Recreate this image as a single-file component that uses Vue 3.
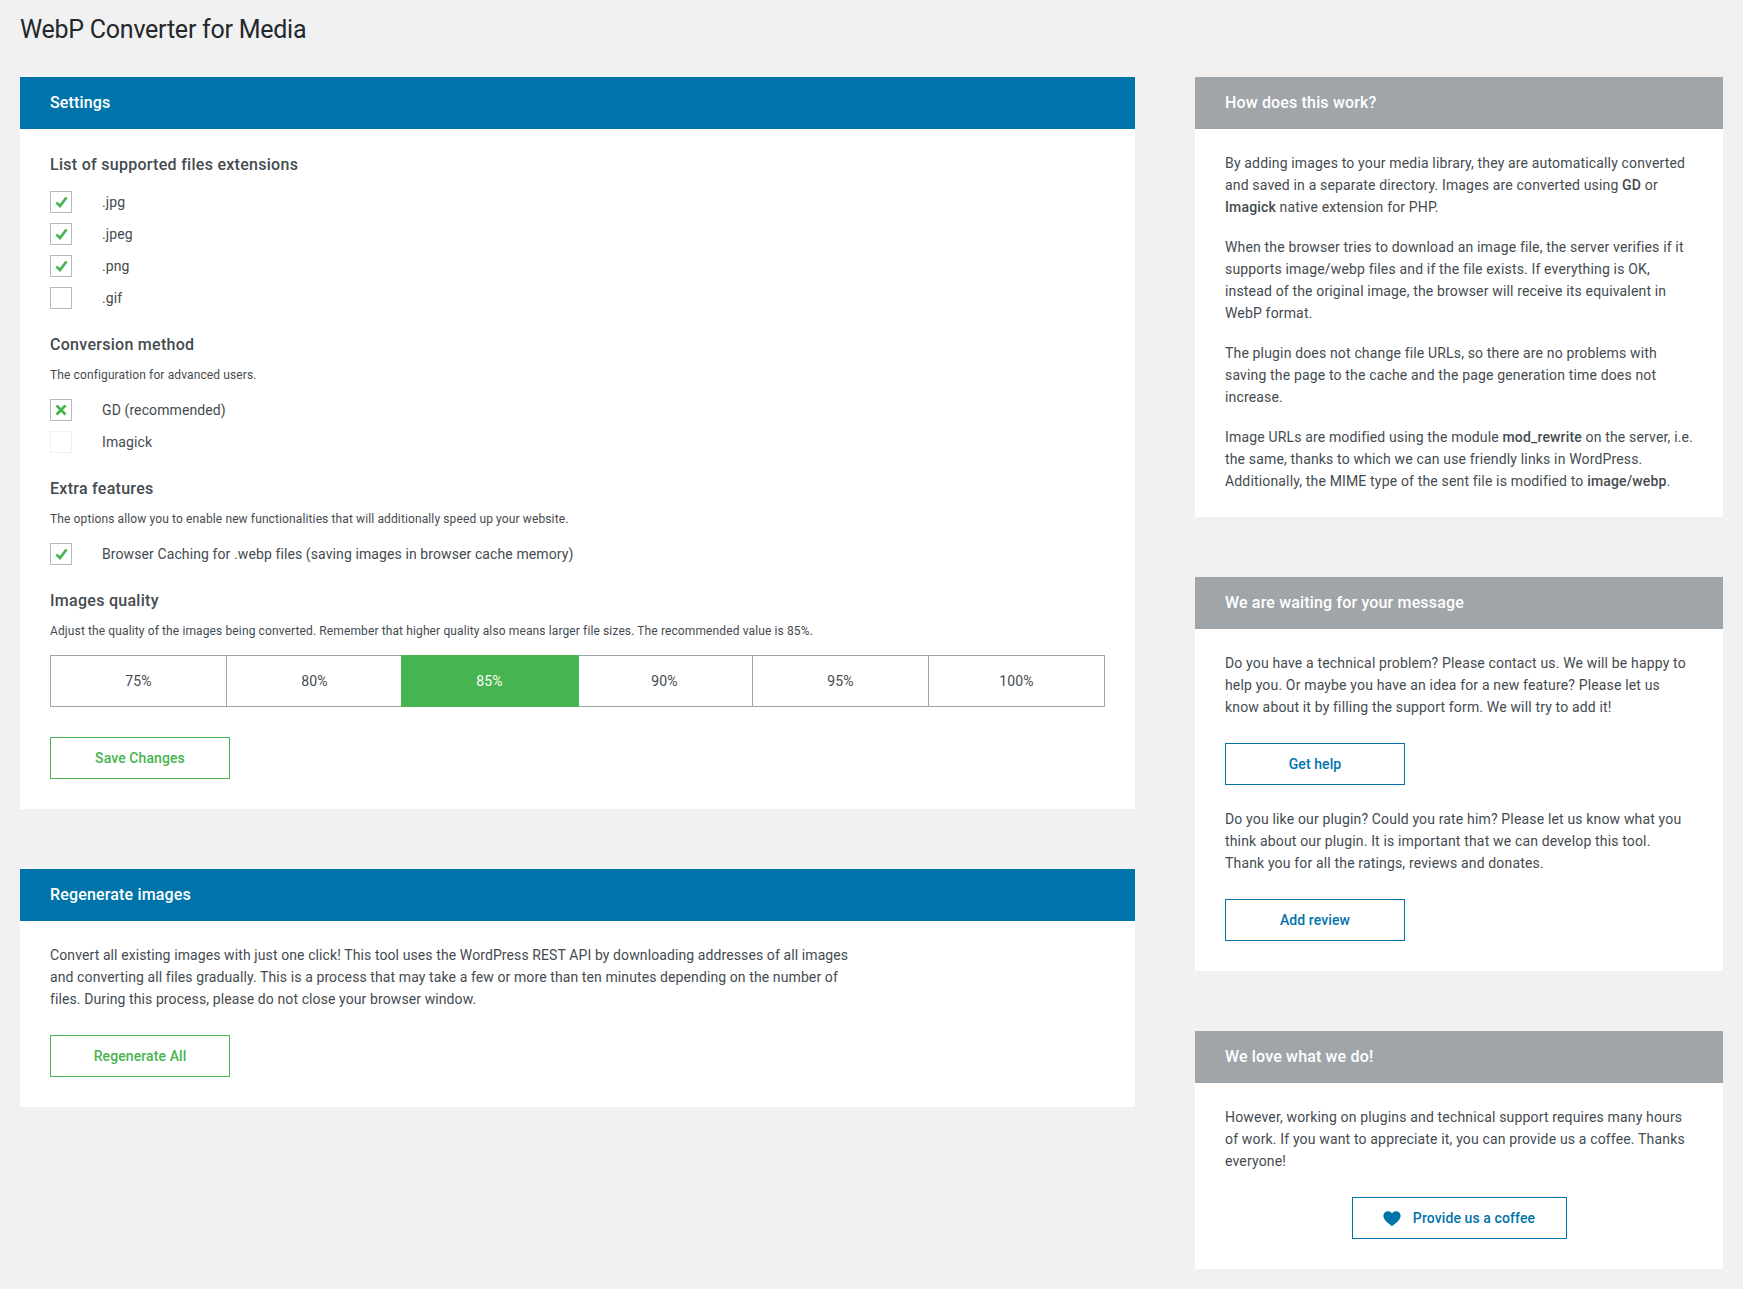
<script setup>
const exts = [
  { label: '.jpg', on: true },
  { label: '.jpeg', on: true },
  { label: '.png', on: true },
  { label: '.gif', on: false }
]
const qualities = ['75%', '80%', '85%', '90%', '95%', '100%']
</script>

<template>
  <div class="page">
    <h1 class="title">WebP Converter for Media</h1>
    <div class="columns">
      <div class="col-main">
        <section class="card">
          <h2 class="head blue">Settings</h2>
          <div class="body">
            <h3 class="sec first">List of supported files extensions</h3>
            <div class="opts">
              <label v-for="e in exts" :key="e.label" class="opt">
                <span class="box">
                  <svg v-if="e.on" viewBox="0 0 20 20" class="mark"><path d="M5.5 10.500 9 14 15.500 5.500" /></svg>
                </span>
                <span>{{ e.label }}</span>
              </label>
            </div>

            <h3 class="sec">Conversion method</h3>
            <p class="sub">The configuration for advanced users.</p>
            <div class="opts">
              <label class="opt">
                <span class="box">
                  <svg viewBox="0 0 20 20" class="mark"><path d="M5.5 5.500 14.500 14.500M14.500 5.500 5.500 14.500" /></svg>
                </span>
                <span>GD (recommended)</span>
              </label>
              <label class="opt">
                <span class="box faint"></span>
                <span>Imagick</span>
              </label>
            </div>

            <h3 class="sec">Extra features</h3>
            <p class="sub">The options allow you to enable new functionalities that will additionally speed up your website.</p>
            <div class="opts">
              <label class="opt">
                <span class="box">
                  <svg viewBox="0 0 20 20" class="mark"><path d="M5.5 10.500 9 14 15.500 5.500" /></svg>
                </span>
                <span>Browser Caching for .webp files (saving images in browser cache memory)</span>
              </label>
            </div>

            <h3 class="sec">Images quality</h3>
            <p class="sub">Adjust the quality of the images being converted. Remember that higher quality also means larger file sizes. The recommended value is 85%.</p>
            <div class="quality">
              <div v-for="q in qualities" :key="q" class="q" :class="{ active: q === '85%' }">{{ q }}</div>
            </div>
            <a class="btn green save">Save Changes</a>
          </div>
        </section>

        <section class="card">
          <h2 class="head blue">Regenerate images</h2>
          <div class="body tight">
            <p class="text nomargin">Convert all existing images with just one click! This tool uses the WordPress REST API by downloading addresses of all images<br>and converting all files gradually. This is a process that may take a few or more than ten minutes depending on the number of<br>files. During this process, please do not close your browser window.</p>
            <a class="btn green after-text">Regenerate All</a>
          </div>
        </section>
      </div>

      <aside class="col-side">
        <section class="card">
          <h2 class="head gray">How does this work?</h2>
          <div class="body tight short">
            <p class="text">By adding images to your media library, they are automatically converted<br>and saved in a separate directory. Images are converted using <b>GD</b> or<br><b>Imagick</b> native extension for PHP.</p>
            <p class="text">When the browser tries to download an image file, the server verifies if it<br>supports image/webp files and if the file exists. If everything is OK,<br>instead of the original image, the browser will receive its equivalent in<br>WebP format.</p>
            <p class="text">The plugin does not change file URLs, so there are no problems with<br>saving the page to the cache and the page generation time does not<br>increase.</p>
            <p class="text nomargin">Image URLs are modified using the module <b>mod_rewrite</b> on the server, i.e.<br>the same, thanks to which we can use friendly links in WordPress.<br>Additionally, the MIME type of the sent file is modified to <b>image/webp</b>.</p>
          </div>
        </section>

        <section class="card">
          <h2 class="head gray">We are waiting for your message</h2>
          <div class="body tight">
            <p class="text nomargin">Do you have a technical problem? Please contact us. We will be happy to<br>help you. Or maybe you have an idea for a new feature? Please let us<br>know about it by filling the support form. We will try to add it!</p>
            <a class="btn blue-btn after-text">Get help</a>
            <p class="text nomargin gap-top">Do you like our plugin? Could you rate him? Please let us know what you<br>think about our plugin. It is important that we can develop this tool.<br>Thank you for all the ratings, reviews and donates.</p>
            <a class="btn blue-btn after-text">Add review</a>
          </div>
        </section>

        <section class="card">
          <h2 class="head gray">We love what we do!</h2>
          <div class="body tight">
            <p class="text nomargin">However, working on plugins and technical support requires many hours<br>of work. If you want to appreciate it, you can provide us a coffee. Thanks<br>everyone!</p>
            <div class="center">
              <a class="btn blue-btn coffee">
                <svg viewBox="0 0 24 20" class="heart"><path d="M12 20C8.500 17 .5 12.600 .5 6.200 .5 2.800 3.200 .2 6.500 .2c2.300 0 4.300 1.100 5.500 3 1.200-1.900 3.200-3 5.500-3 3.300 0 6 2.600 6 6 0 6.400-8 10.800-11.500 13.800Z" /></svg>
                Provide us a coffee
              </a>
            </div>
          </div>
        </section>
      </aside>
    </div>
  </div>
</template>

<style>
html, body { margin: 0; background: #f1f1f1; }
</style>

<style scoped>
.page {
  box-sizing: border-box;
  width: 1743px;
  min-height: 1289px;
  padding: 0 20px 20px;
  background: #f1f1f1;
  color: #444b50;
  font-family: Roboto, "Noto Sans", sans-serif;
  font-size: 14px;
  letter-spacing: 0.1px;
}
.title {
  margin: 0;
  padding: 14px 0 0;
  height: 77px;
  box-sizing: border-box;
  font-size: 25px;
  line-height: 32px;
  font-weight: 400;
  letter-spacing: -0.25px;
  color: #23282d;
}
.columns { display: flex; gap: 60px; align-items: flex-start; }
.col-main { width: 1115px; display: flex; flex-direction: column; gap: 60px; }
.col-side { width: 528px; display: flex; flex-direction: column; gap: 60px; }
.col-side .text { letter-spacing: 0.16px; }
.card { background: #fff; }
.head {
  margin: 0;
  height: 52px;
  padding: 0 30px;
  line-height: 52px;
  font-size: 16px;
  font-weight: 500;
  letter-spacing: 0.16px;
  color: #fff;
}
.blue { background: #0073aa; }
.gray { background: #a0a5aa; }
.body { padding: 25px 30px 30px; }
.body.tight { padding-top: 23px; }
.body.short { padding-bottom: 25px; }
.sec {
  margin: 25px 0 0;
  font-size: 16px;
  line-height: 22px;
  font-weight: 500;
  letter-spacing: 0.28px;
  color: #444b50;
}
.sec.first { margin-top: 0; }
.sub {
  margin: 10px 0 0;
  font-size: 12px;
  line-height: 18px;
  letter-spacing: 0.12px;
}
.opts { display: flex; flex-direction: column; gap: 10px; margin-top: 15px; }
.opt { display: flex; align-items: center; gap: 30px; line-height: 22px; }
.box {
  box-sizing: border-box;
  width: 22px;
  height: 22px;
  flex: none;
  border: 1px solid #b4b9be;
}
.box.faint { border-color: #f1f1f1; }
.mark { display: block; width: 20px; height: 20px; fill: none; stroke: #46b450; stroke-width: 2.8; }
.quality { display: flex; margin-top: 15px; border: 1px solid #a0a5aa; height: 52px; box-sizing: border-box; }
.q {
  flex: 1 1 0;
  text-align: center;
  line-height: 50px;
  border-left: 1px solid #a0a5aa;
}
.q:first-child { border-left: 0; }
.q.active {
  background: #46b450;
  color: #fff;
  margin: -1px 0;
  line-height: 52px;
  border-left: 0;
  box-shadow: -1px 0 0 #46b450, 2px 0 0 #46b450;
}
.q.active + .q { border-left: 0; }
.btn {
  box-sizing: border-box;
  display: block;
  width: 180px;
  height: 42px;
  line-height: 40px;
  text-align: center;
  font-weight: 500;
  font-size: 14px;
  border: 1px solid;
}
.green { color: #46b450; border-color: #46b450; }
.blue-btn { color: #0073aa; border-color: #0073aa; }
.save { margin-top: 30px; }
.text { margin: 0 0 18px; line-height: 22px; white-space: nowrap; }
.text b { font-weight: 500; }
.text.nomargin { margin-bottom: 0; }
.after-text { margin-top: 25px; }
.gap-top { margin-top: 23px; }
.center { display: flex; justify-content: center; margin-top: 25px; }
.coffee { width: 215px; display: flex; align-items: center; justify-content: center; gap: 12px; }
.heart { width: 18px; height: 15px; fill: #0073aa; }
</style>
